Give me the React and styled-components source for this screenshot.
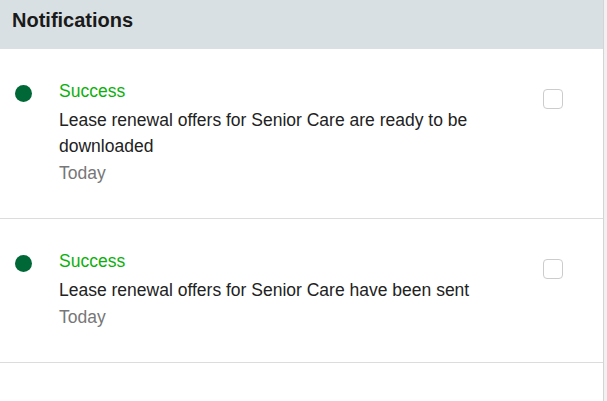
import React from "react"
import styled, { createGlobalStyle } from "styled-components"

const notifications = [
  {
    id: 1,
    status: "Success",
    message: "Lease renewal offers for Senior Care are ready to be downloaded",
    date: "Today",
  },
  {
    id: 2,
    status: "Success",
    message: "Lease renewal offers for Senior Care have been sent",
    date: "Today",
  },
]

const GlobalStyle = createGlobalStyle`
  html, body {
    margin: 0;
    padding: 0;
    background: #f1f1f1;
  }
  body {
    font-family: "Liberation Sans", Arial, sans-serif;
  }
`

const App = () => (
  <>
    <GlobalStyle />
    <Panel>
      <Header>
        <h2>Notifications</h2>
      </Header>
      {notifications.map((n) => (
        <NotificationRow key={n.id}>
          <StatusDot />
          <NotificationBody>
            <StatusLabel>{n.status}</StatusLabel>
            <Message>{n.message}</Message>
            <DateLabel>{n.date}</DateLabel>
          </NotificationBody>
          <Checkbox type="checkbox" aria-label="Mark as read" />
        </NotificationRow>
      ))}
    </Panel>
  </>
)

const Panel = styled.main`
  width: 603px;
  min-height: 100vh;
  background: #ffffff;
  border-right: 1px solid #d4d4d4;
`

const Header = styled.header`
  height: 49px;
  box-sizing: border-box;
  padding: 9px 12px 0;
  background: #d9e0e3;

  h2 {
    margin: 0;
    font-size: 20px;
    font-weight: bold;
    line-height: 23px;
    color: #1a1a1a;
  }
`

const NotificationRow = styled.section`
  display: flex;
  align-items: flex-start;
  padding: 29px 40px 32px 15px;
  border-bottom: 1px solid #dcdcdc;
`

const StatusDot = styled.span`
  flex: none;
  width: 17px;
  height: 17px;
  margin-top: 7px;
  border-radius: 50%;
  background: #006837;
`

const NotificationBody = styled.div`
  flex: 1;
  margin-left: 27px;
  font-size: 17.5px;
  line-height: 26px;
`

const StatusLabel = styled.div`
  color: #0cb00c;
  margin-bottom: 3px;
`

const Message = styled.div`
  color: #222222;
  max-width: 430px;
`

const DateLabel = styled.div`
  color: #777777;
  margin-top: 1px;
`

const Checkbox = styled.input`
  flex: none;
  appearance: none;
  width: 20px;
  height: 20px;
  margin: 11px 0 0 19px;
  border: 1px solid #cccccc;
  border-radius: 4px;
  background: #ffffff;
  box-sizing: border-box;
`

export default App
